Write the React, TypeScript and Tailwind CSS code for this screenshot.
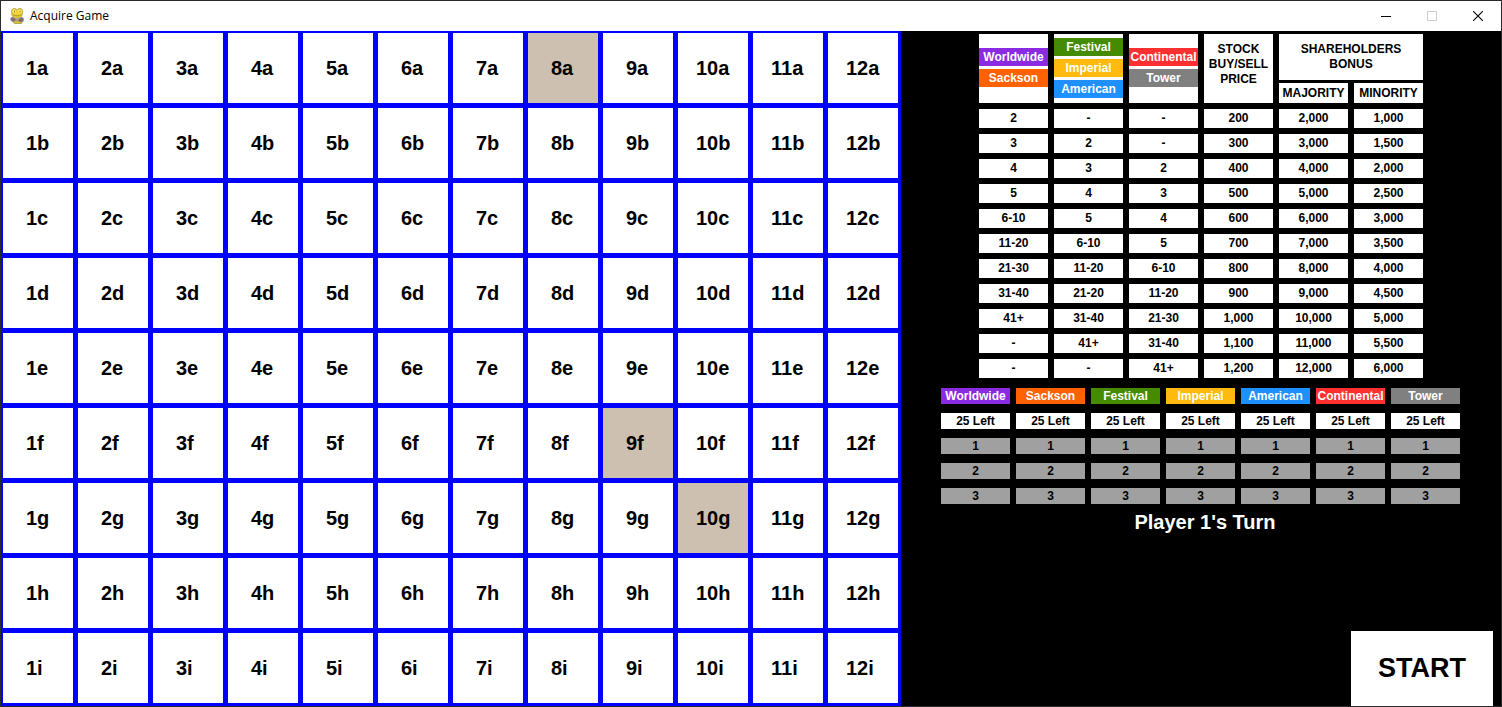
import React from "react";

const COLUMNS = Array.from({ length: 12 }, (_, i) => i + 1);
const ROWS = ["a", "b", "c", "d", "e", "f", "g", "h", "i"];
const PLACED = new Set(["8a", "9f", "10g"]);

const HOTELS = [
  { name: "Worldwide", color: "bg-[#8a2be2]" },
  { name: "Sackson", color: "bg-[#ff6103]" },
  { name: "Festival", color: "bg-[#458b00]" },
  { name: "Imperial", color: "bg-[#ffb90f]" },
  { name: "American", color: "bg-[#1e90ff]" },
  { name: "Continental", color: "bg-[#ff3030]" },
  { name: "Tower", color: "bg-[#808080]" },
];

const TIERS = [HOTELS.slice(0, 2), HOTELS.slice(2, 5), HOTELS.slice(5, 7)];

const PRICES = [
  ["2", "-", "-", "200", "2,000", "1,000"],
  ["3", "2", "-", "300", "3,000", "1,500"],
  ["4", "3", "2", "400", "4,000", "2,000"],
  ["5", "4", "3", "500", "5,000", "2,500"],
  ["6-10", "5", "4", "600", "6,000", "3,000"],
  ["11-20", "6-10", "5", "700", "7,000", "3,500"],
  ["21-30", "11-20", "6-10", "800", "8,000", "4,000"],
  ["31-40", "21-20", "11-20", "900", "9,000", "4,500"],
  ["41+", "31-40", "21-30", "1,000", "10,000", "5,000"],
  ["-", "41+", "31-40", "1,100", "11,000", "5,500"],
  ["-", "-", "41+", "1,200", "12,000", "6,000"],
];

function SnakeIcon() {
  return (
    <svg width="16" height="16" viewBox="0 0 16 16" aria-hidden="true">
      <path d="M3 12.500h10.500l-1 3H5.500z" fill="#d9c12e" stroke="#8f8030" strokeWidth="0.600" />
      <path
        d="M2.500 3.200C2.500 1.400 3.800.5 5.200.5c1.400 0 2.300.600 2.900 1.600C8.700 1.100 9.700.5 11 .5c1.500 0 2.600 1 2.600 2.800 0 1-.3 1.700-.3 2.700 0 2.500-2.200 4-5.200 4S2.800 8.600 2.800 6.100c0-1.100-.3-1.900-.3-2.900z"
        fill="#efd532"
        stroke="#a89324"
        strokeWidth="0.700"
      />
      <circle cx="5.300" cy="3.300" r="1.500" fill="#f8ec82" />
      <circle cx="10.900" cy="3.300" r="1.500" fill="#f8ec82" />
      <path d="M5 2.800h1v1.500H5zM10.500 2.800h1v1.500h-1z" fill="#85732a" />
      <path d="M3.600 6.600c2.500 1.700 6.400 1.700 8.900 0" fill="none" stroke="#a08a20" strokeWidth="0.900" />
      <path d="M1.500 9.800 4 9l2 1.500v3H3l-1.500-1.200z" fill="#77777d" />
      <path d="M10 10l3-1 1.700 1.200v3L12.500 14H10z" fill="#77777d" />
      <path d="M5.500 10.200h5v3.200h-5z" fill="#a9a08e" />
      <path d="M4.500 10.800h2v1.500h-2zM9.500 11.500h2V13h-2z" fill="#b84a38" />
    </svg>
  );
}

function TitleBar() {
  return (
    <header className="flex h-[30px] items-center bg-white pl-2">
      <SnakeIcon />
      <h1 className="ml-[5px] font-['Open_Sans',sans-serif] text-xs text-black">Acquire Game</h1>
      <div className="ml-auto flex h-full">
        <button aria-label="Minimize" className="flex w-[46px] items-center justify-center">
          <svg width="10" height="10" viewBox="0 0 10 10" shapeRendering="crispEdges">
            <path d="M0 5.500h10" stroke="#000" />
          </svg>
        </button>
        <button aria-label="Maximize" disabled className="flex w-[46px] items-center justify-center">
          <svg width="10" height="10" viewBox="0 0 10 10">
            <path d="M.5.5h9v9h-9z" fill="none" stroke="#ccc" />
          </svg>
        </button>
        <button aria-label="Close" className="flex w-[46px] items-center justify-center">
          <svg width="10" height="10" viewBox="0 0 10 10">
            <path d="M0 0l10 10M10 0L0 10" stroke="#000" strokeWidth="1.100" />
          </svg>
        </button>
      </div>
    </header>
  );
}

function Board() {
  return (
    <section
      aria-label="Board"
      className="grid w-3/5 grid-cols-12 content-start gap-[5px] bg-[#0000ff] pt-[2px] pr-[3px] pb-[3px] pl-[2px]"
    >
      {ROWS.map((row) =>
        COLUMNS.map((col) => {
          const id = `${col}${row}`;
          return (
            <button
              key={id}
              className={`flex aspect-square items-center text-xl font-bold text-black ${
                col > 9 ? "pl-[18px]" : "pl-[23px]"
              } ${PLACED.has(id) ? "bg-[#cdc0b0]" : "bg-white"}`}
            >
              {id}
            </button>
          );
        })
      )}
    </section>
  );
}

function PriceTable() {
  const cell = "border-x-[3px] border-black bg-white p-0";
  return (
    <table className="mx-auto w-[450px] table-fixed border-separate border-spacing-0 text-center text-xs font-bold text-black">
      <thead>
        <tr className="h-[49px]">
          {TIERS.map((tier) => (
            <th key={tier[0].name} rowSpan={2} className={`${cell} border-b-[6px] align-middle`}>
              <div className="flex flex-col gap-[3px] pb-[2px]">
                {tier.map((hotel) => (
                  <span key={hotel.name} className={`${hotel.color} flex h-[18px] items-center justify-center text-white`}>
                    {hotel.name}
                  </span>
                ))}
              </div>
            </th>
          ))}
          <th rowSpan={2} className={`${cell} border-b-[6px] align-top`}>
            <div className="pt-2 leading-[15px]">STOCK BUY/SELL PRICE</div>
          </th>
          <th colSpan={2} className={`${cell} border-b-[3px] align-top`}>
            <div className="px-4 pt-2 leading-[15px]">SHAREHOLDERS BONUS</div>
          </th>
        </tr>
        <tr className="h-[26px]">
          <th className={`${cell} border-b-[6px] leading-5`}>MAJORITY</th>
          <th className={`${cell} border-b-[6px] leading-5`}>MINORITY</th>
        </tr>
      </thead>
      <tbody>
        {PRICES.map((row) => (
          <tr key={row[3]}>
            {row.map((value, i) => (
              <td key={i} className={`${cell} border-b-[6px] leading-[19px]`}>
                {value}
              </td>
            ))}
          </tr>
        ))}
      </tbody>
    </table>
  );
}

function StockTable() {
  const cell = "border-x-[3px] border-b-[9px] border-black p-0 leading-4";
  return (
    <table className="mx-auto mt-1 w-[525px] table-fixed border-separate border-spacing-0 text-center text-xs font-bold text-black">
      <thead>
        <tr>
          {HOTELS.map((hotel) => (
            <th key={hotel.name} className={`${cell} ${hotel.color} text-white`}>
              {hotel.name}
            </th>
          ))}
        </tr>
      </thead>
      <tbody>
        <tr>
          {HOTELS.map((hotel) => (
            <td key={hotel.name} className={`${cell} bg-white`}>
              25 Left
            </td>
          ))}
        </tr>
        {[1, 2, 3].map((count) => (
          <tr key={count}>
            {HOTELS.map((hotel) => (
              <td key={hotel.name} className={`${cell} bg-[#a0a0a0]`}>
                {count}
              </td>
            ))}
          </tr>
        ))}
      </tbody>
    </table>
  );
}

export default function App() {
  return (
    <div className="flex min-h-screen flex-col border border-[#2b2b2b] bg-black font-['Liberation_Sans',Arial,sans-serif]">
      <TitleBar />
      <main className="flex flex-1 items-stretch">
        <Board />
        <aside className="flex flex-1 flex-col bg-black pt-[3px]">
          <PriceTable />
          <div className="pr-px">
            <StockTable />
          </div>
          <p className="pl-2 text-center text-xl leading-[18px] font-bold text-white">Player 1&apos;s Turn</p>
          <button className="mt-auto mr-2 h-[75px] w-[142px] self-end bg-white text-[27px] font-bold text-black">
            START
          </button>
        </aside>
      </main>
    </div>
  );
}
